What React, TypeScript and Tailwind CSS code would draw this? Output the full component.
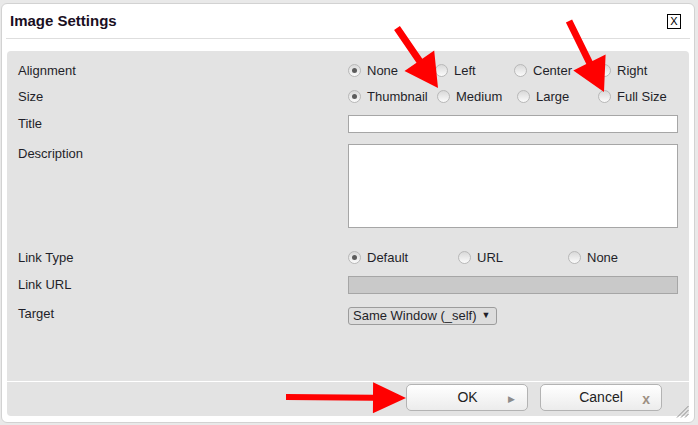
import React from "react";

type Opt = { label: string; w: string; checked?: boolean };

const alignment: Opt[] = [
  { label: "None", w: "w-[87px]", checked: true },
  { label: "Left", w: "w-[79px]" },
  { label: "Center", w: "w-[84px]" },
  { label: "Right", w: "" },
];

const sizes: Opt[] = [
  { label: "Thumbnail", w: "w-[89px]", checked: true },
  { label: "Medium", w: "w-[80px]" },
  { label: "Large", w: "w-[81px]" },
  { label: "Full Size", w: "" },
];

const linkTypes: Opt[] = [
  { label: "Default", w: "w-[110px]", checked: true },
  { label: "URL", w: "w-[110px]" },
  { label: "None", w: "" },
];

function Radio({ checked }: { checked?: boolean }) {
  return (
    <span className="flex h-[13px] w-[13px] shrink-0 items-center justify-center rounded-full border border-[#b8b8b8] bg-linear-to-b from-[#d9d9d9] to-[#fbfbfb]">
      {checked && <span className="h-[5px] w-[5px] rounded-full bg-[#5c5c5c]" />}
    </span>
  );
}

function RadioGroup({ options }: { options: Opt[] }) {
  return (
    <div className="flex items-center">
      {options.map((o) => (
        <label key={o.label} className={`flex items-center gap-[6px] ${o.w}`}>
          <Radio checked={o.checked} />
          <span className="leading-[15px]">{o.label}</span>
        </label>
      ))}
    </div>
  );
}

function Label({ children, extra = "" }: { children: React.ReactNode; extra?: string }) {
  return <div className={`w-[330px] shrink-0 leading-[15px] ${extra}`}>{children}</div>;
}

// polygon for a straight arrow from (x1,y1) with its tip at (x2,y2)
function arrow(x1: number, y1: number, x2: number, y2: number, shaft = 7, headLen = 33, headW = 36) {
  const dx = x2 - x1;
  const dy = y2 - y1;
  const len = Math.hypot(dx, dy);
  const ux = dx / len;
  const uy = dy / len;
  const px = -uy;
  const py = ux;
  const bx = x2 - ux * headLen;
  const by = y2 - uy * headLen;
  const s = shaft / 2;
  const h = headW / 2;
  const pts = [
    [x1 + px * s, y1 + py * s],
    [bx + px * s, by + py * s],
    [bx + px * h, by + py * h],
    [x2, y2],
    [bx - px * h, by - py * h],
    [bx - px * s, by - py * s],
    [x1 - px * s, y1 - py * s],
  ];
  return pts.map((p) => `${p[0].toFixed(1)},${p[1].toFixed(1)}`).join(" ");
}

export default function App() {
  return (
    <div className="relative h-[425px] w-[698px] overflow-hidden bg-[#e9e9e9] pl-[1px] pt-[3px] font-['Liberation_Sans',Arial,sans-serif] text-[13px] text-[#1f1f29]">
      <div className="relative flex h-[420px] w-[694px] flex-col rounded-[6px] border border-[#d2d2d2] bg-white">
        {/* title bar */}
        <div className="flex h-[34px] shrink-0 items-center justify-between pl-[8px] pr-[13px]">
          <div className="-mt-[2px] text-[15px] font-bold leading-[17px] text-[#1a0f1f]">Image Settings</div>
          <div className="flex h-[15px] w-[14px] items-center justify-center border border-black bg-white text-[11px] leading-none text-black">
            X
          </div>
        </div>
        <div className="mx-[4px] h-px shrink-0 bg-[#dedede]" />

        {/* settings panel */}
        <div className="mx-[5px] mb-[6px] mt-[12px] flex flex-1 flex-col rounded-[4px] bg-[#e3e3e3]">
          <div className="flex flex-1 flex-col pl-[11px] pt-[6px]">
            <div className="flex h-[26px] items-center">
              <Label>Alignment</Label>
              <RadioGroup options={alignment} />
            </div>
            <div className="flex h-[27px] items-center">
              <Label>Size</Label>
              <RadioGroup options={sizes} />
            </div>
            <div className="mt-[5px] flex items-center">
              <Label extra="pb-[2px]">Title</Label>
              <input
                readOnly
                className="h-[18px] w-[330px] border border-[#a6a6a6] bg-white outline-none"
              />
            </div>
            <div className="mt-[11px] flex items-start">
              <Label extra="pt-[2px]">Description</Label>
              <textarea
                readOnly
                className="h-[84px] w-[330px] resize-none border border-[#a6a6a6] bg-white outline-none"
              />
            </div>
            <div className="mt-[19px] flex h-[20px] items-center">
              <Label>Link Type</Label>
              <RadioGroup options={linkTypes} />
            </div>
            <div className="mt-[9px] flex items-center">
              <Label extra="pb-[2px]">Link URL</Label>
              <input
                readOnly
                disabled
                className="h-[18px] w-[330px] border border-[#a6a6a6] bg-[#c9c9c9] outline-none"
              />
            </div>
            <div className="mt-[12px] flex items-center">
              <Label extra="pb-[4px]">Target</Label>
              <div className="flex h-[18px] w-[149px] items-center rounded-[3px] border border-[#9c9c9c] bg-[#dddddd] pl-[4px] leading-none">
                <span>Same Window (_self)</span>
                <span className="ml-[5px] text-[9px]">▼</span>
              </div>
            </div>
          </div>

          {/* buttons */}
          <div className="flex h-[35px] shrink-0 items-start justify-end gap-[12px] border-t border-white pr-[27px] pt-[2px]">
            <button className="relative flex h-[27px] w-[122px] items-center justify-center rounded-[5px] border border-[#b3b3b3] bg-linear-to-b from-white to-[#ececec] text-[14px] text-[#222]">
              <span className="pl-[1px]">OK</span>
              <span className="absolute right-[12px] top-[8px] text-[9px] text-[#8c8c8c]">▶</span>
            </button>
            <button className="relative flex h-[27px] w-[122px] items-center justify-center rounded-[5px] border border-[#b3b3b3] bg-linear-to-b from-white to-[#ececec] text-[14px] text-[#222]">
              <span>Cancel</span>
              <span className="absolute right-[11px] top-[4px] text-[14px] font-bold text-[#9d8f82]">x</span>
            </button>
          </div>
        </div>

        {/* resize grip */}
        <svg className="absolute bottom-[4px] right-[5px]" width="13" height="13" viewBox="0 0 13 13">
          <g stroke="#8d8d8d" strokeWidth="1">
            <line x1="1" y1="12.5" x2="12.5" y2="1" />
            <line x1="5" y1="12.5" x2="12.5" y2="5" />
            <line x1="9" y1="12.5" x2="12.5" y2="9" />
          </g>
        </svg>
      </div>

      {/* red annotation arrows */}
      <svg className="pointer-events-none absolute left-0 top-0" width="698" height="425" viewBox="0 0 698 425">
        <polygon points={arrow(397, 28, 438, 88)} fill="#ff0000" />
        <polygon points={arrow(569, 21, 604, 92)} fill="#ff0000" />
        <polygon points={arrow(286, 397, 406, 398, 6, 33, 31)} fill="#ff0000" />
      </svg>
    </div>
  );
}
